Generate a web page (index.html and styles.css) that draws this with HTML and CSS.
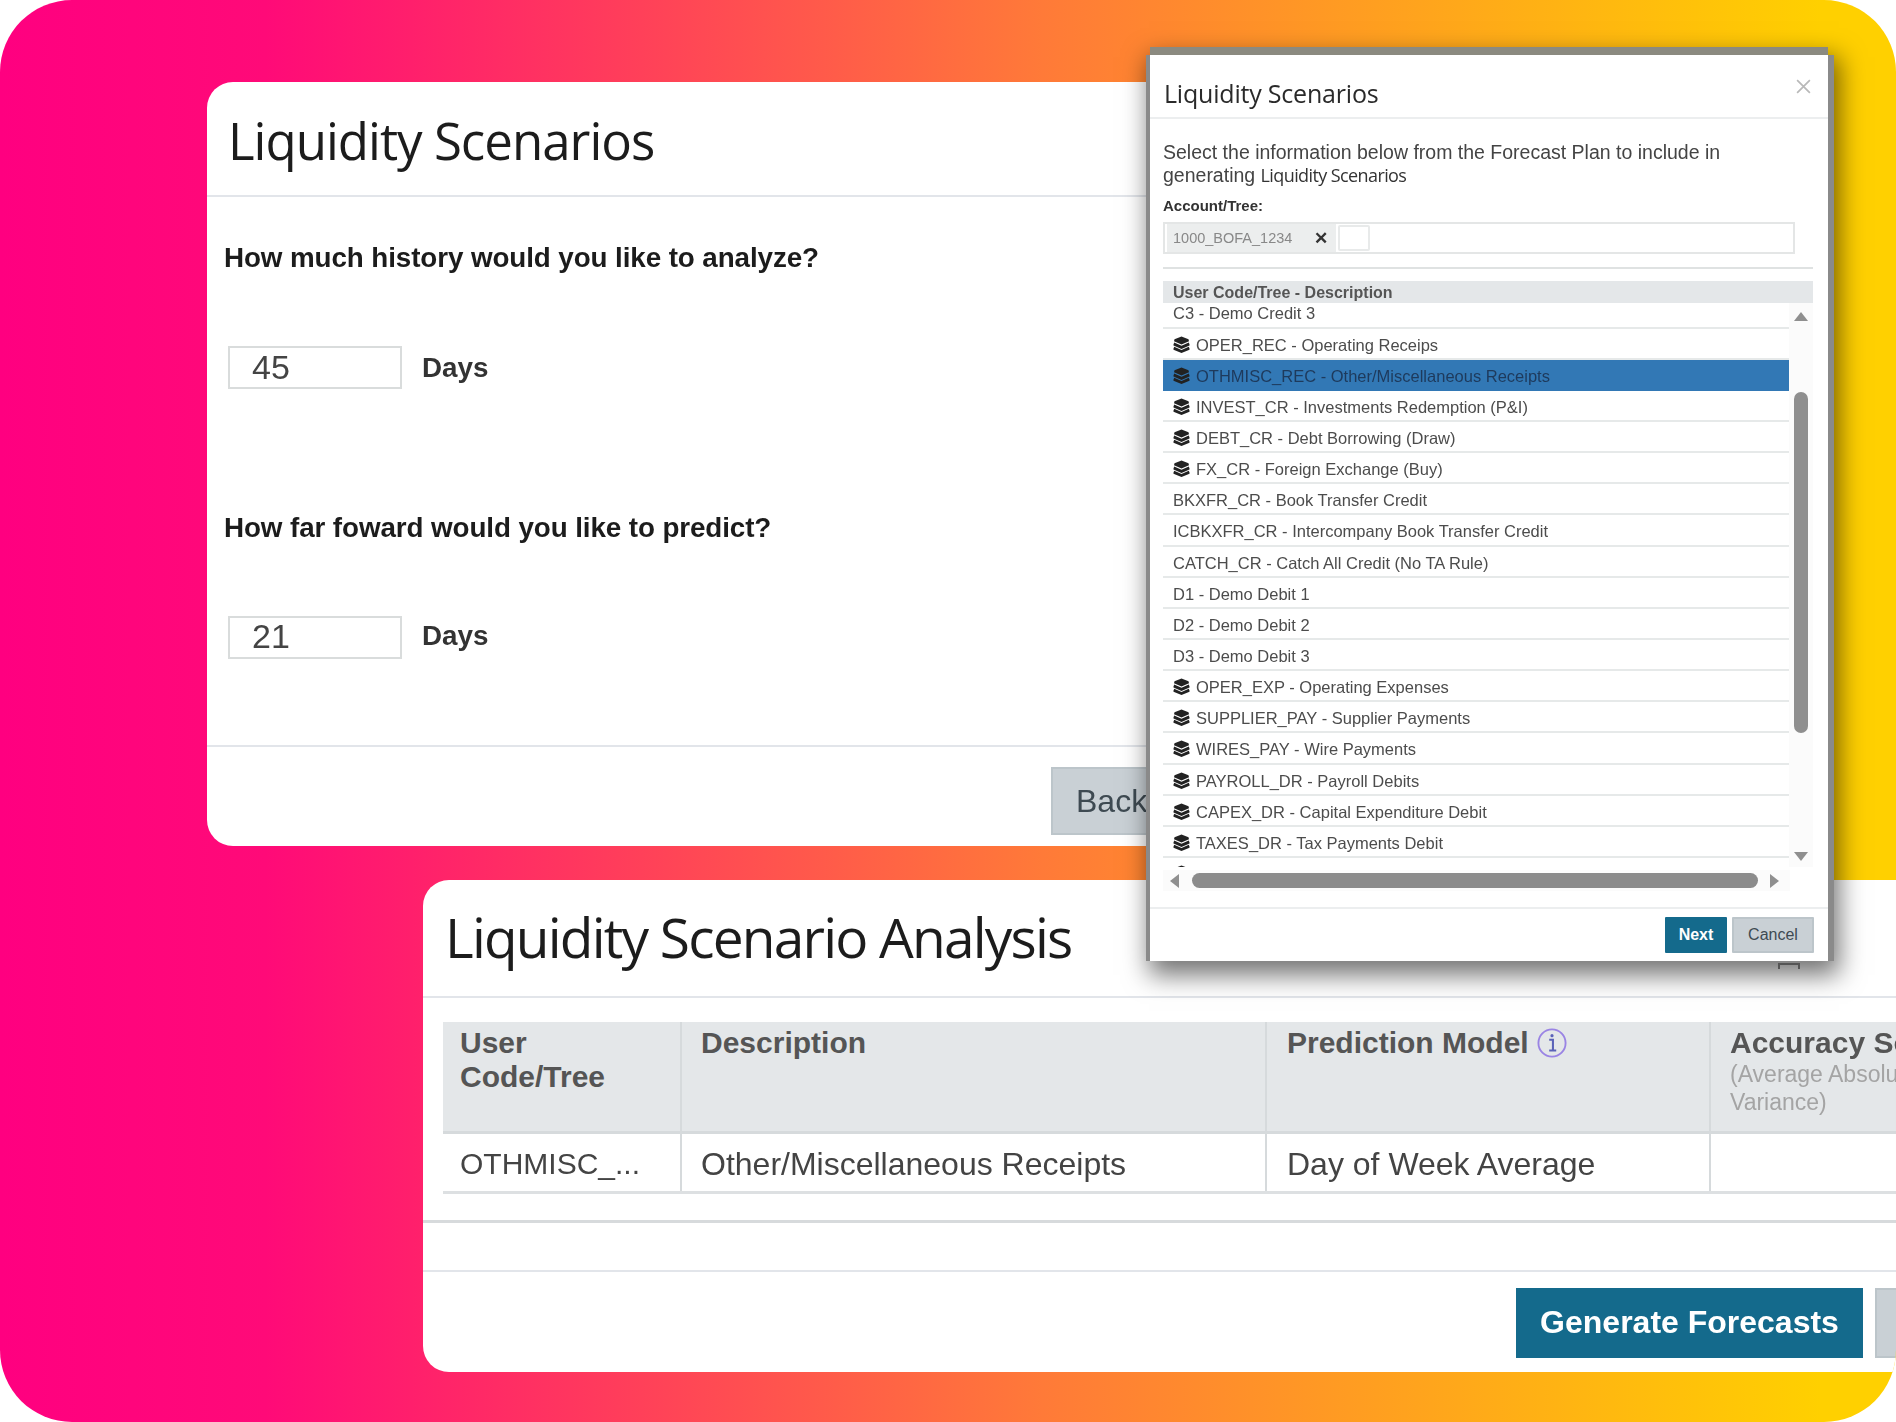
FILE: index.html
```html
<!DOCTYPE html>
<html lang="en">
<head>
<meta charset="utf-8">
<title>Liquidity Scenarios</title>
<link rel="stylesheet" href="styles.css">
</head>
<body>
<svg class="defs" width="0" height="0" aria-hidden="true">
  <symbol id="stack" viewBox="0 0 17 17">
    <path d="M8.5 .5 15.5 3.2 16 5.2 8.5 8.4 1 5.2 1.5 3.2Z"/>
    <path d="M1.2 6.6 8.5 9.7l7.3-3.1L16.5 8.4v1.2L8.5 13 .5 9.6V8.4Z"/>
    <path d="M1.2 10.8 8.5 13.9l7.3-3.1.7 1.8v1.2L8.5 17 .5 13.8v-1.2Z"/>
  </symbol>
</svg>
<main class="stage">
  <section class="card card-history">
    <header class="card-head"><h1 class="title">Liquidity Scenarios</h1></header>
    <div class="card-body">
      <p class="question">How much history would you like to analyze?</p>
      <div class="field"><span class="num-input">45</span><span class="unit">Days</span></div>
      <p class="question question-next">How far foward would you like to predict?</p>
      <div class="field field-low"><span class="num-input">21</span><span class="unit">Days</span></div>
    </div>
    <footer class="card-foot"><button class="btn btn-grey btn-back">Back</button></footer>
  </section>

  <section class="card card-analysis">
    <header class="card-head analysis-head"><h1 class="title title-large">Liquidity Scenario Analysis</h1></header>
    <div class="table-wrap">
      <table class="grid">
        <colgroup><col class="c1"><col class="c2"><col class="c3"><col class="c4"></colgroup>
        <thead>
          <tr>
            <th>User<br>Code/Tree</th>
            <th>Description</th>
            <th>Prediction Model <svg class="info" viewBox="0 0 32 32"><circle cx="16" cy="16" r="14.5" fill="none" stroke="#9a84e4" stroke-width="2"/><path d="M13 12.5H17V24M13 24H20.5" fill="none" stroke="#5a62b8" stroke-width="2.2"/><circle cx="16" cy="8.2" r="1.7" fill="#5a62b8"/></svg></th>
            <th>Accuracy Score<small>(Average Absolute<br>Variance)</small></th>
          </tr>
        </thead>
        <tbody>
          <tr><td class="td-code">OTHMISC_...</td><td>Other/Miscellaneous Receipts</td><td>Day of Week Average</td><td></td></tr>
        </tbody>
      </table>
    </div>
    <div class="divider"></div>
    <footer class="card-foot analysis-foot">
      <button class="btn btn-teal btn-generate">Generate Forecasts</button>
      <button class="btn btn-grey btn-tail" aria-label="Cancel"></button>
    </footer>
  </section>

  <section class="dialog">
    <header class="dialog-head">
      <h2 class="dialog-title">Liquidity Scenarios</h2>
      <svg class="close" viewBox="0 0 16 16"><path d="M2 2 14 14M14 2 2 14" fill="none" stroke="#b9b9b9" stroke-width="1.6"/></svg>
    </header>
    <div class="dialog-body">
      <p class="intro">Select the information below from the Forecast Plan to include in generating <span class="intro-alt">Liquidity Scenarios</span></p>
      <label class="label">Account/Tree:</label>
      <div class="tag-input">
        <span class="chip"><span class="chip-text">1000_BOFA_1234</span><b class="chip-x">✕</b></span>
        <span class="mini-box"></span>
      </div>
      <hr class="rule">
      <div class="list-head">User Code/Tree - Description</div>
      <div class="list-frame">
        <div class="list-view">
          <ul class="rows">
            <li class="row">C3 - Demo Credit 3</li>
            <li class="row"><svg class="stack"><use href="#stack"/></svg>OPER_REC - Operating Receips</li>
            <li class="row row-on"><svg class="stack"><use href="#stack"/></svg>OTHMISC_REC - Other/Miscellaneous Receipts</li>
            <li class="row"><svg class="stack"><use href="#stack"/></svg>INVEST_CR - Investments Redemption (P&amp;I)</li>
            <li class="row"><svg class="stack"><use href="#stack"/></svg>DEBT_CR - Debt Borrowing (Draw)</li>
            <li class="row"><svg class="stack"><use href="#stack"/></svg>FX_CR - Foreign Exchange (Buy)</li>
            <li class="row">BKXFR_CR - Book Transfer Credit</li>
            <li class="row">ICBKXFR_CR - Intercompany Book Transfer Credit</li>
            <li class="row">CATCH_CR - Catch All Credit (No TA Rule)</li>
            <li class="row">D1 - Demo Debit 1</li>
            <li class="row">D2 - Demo Debit 2</li>
            <li class="row">D3 - Demo Debit 3</li>
            <li class="row"><svg class="stack"><use href="#stack"/></svg>OPER_EXP - Operating Expenses</li>
            <li class="row"><svg class="stack"><use href="#stack"/></svg>SUPPLIER_PAY - Supplier Payments</li>
            <li class="row"><svg class="stack"><use href="#stack"/></svg>WIRES_PAY - Wire Payments</li>
            <li class="row"><svg class="stack"><use href="#stack"/></svg>PAYROLL_DR - Payroll Debits</li>
            <li class="row"><svg class="stack"><use href="#stack"/></svg>CAPEX_DR - Capital Expenditure Debit</li>
            <li class="row"><svg class="stack"><use href="#stack"/></svg>TAXES_DR - Tax Payments Debit</li>
            <li class="row"><svg class="stack"><use href="#stack"/></svg></li>
          </ul>
        </div>
        <div class="vbar">
          <span class="tri tri-up"></span>
          <span class="vthumb"></span>
          <span class="tri tri-down"></span>
        </div>
      </div>
      <div class="hbar">
        <span class="tri tri-left"></span>
        <span class="hthumb"></span>
        <span class="tri tri-right"></span>
      </div>
    </div>
    <footer class="dialog-foot">
      <button class="btn btn-teal btn-small btn-next">Next</button>
      <button class="btn btn-grey btn-small btn-cancel">Cancel</button>
    </footer>
  </section>
  <span class="peek"></span>
</main>
</body>
</html>
```

FILE: styles.css
```css
* { box-sizing: border-box; }
html, body { margin: 0; padding: 0; }
body { width: 1896px; height: 1422px; background: #fff; overflow: hidden; font-family: "Liberation Sans", Arial, sans-serif; }
.defs { position: absolute; }
h1, h2, p, ul { margin: 0; padding: 0; }
ul { list-style: none; }

.stage {
  position: relative;
  width: 1896px;
  height: 1422px;
  border-radius: 72px;
  overflow: hidden;
  background: linear-gradient(90deg, #ff0080 0%, #ff0a78 14%, #ff7a38 55%, #ffd000 96%);
}

.card { position: absolute; background: #fff; border-radius: 26px; color: #333; filter: blur(.7px); }
.card-history { left: 207px; top: 82px; width: 1000px; height: 764px; }
.card-analysis { left: 423px; top: 880px; width: 1500px; height: 492px; }

.card-head { height: 115px; display: flex; align-items: center; padding: 2px 0 0 21px; border-bottom: 2px solid #e2e5ea; }
.title { font-family: "Open Sans", sans-serif; font-weight: 400; font-size: 51px; letter-spacing: -1px; color: #1c1c1c; }
.title-large { font-size: 55px; letter-spacing: -1.8px; }
.analysis-head { height: 118px; padding: 0 0 4px 22px; }

.card-body { padding: 39px 0 0 17px; height: 550px; border-bottom: 2px solid #e2e5ea; }
.question { font-size: 27.8px; font-weight: 700; line-height: 44px; color: #1c1c1c; letter-spacing: -.1px; }
.field { display: flex; align-items: center; gap: 20px; margin: 66px 0 0 4px; }
.field-low .num-input { padding-bottom: 2px; }
.field-low .unit { margin-top: -4px; }
.question-next { margin-top: 117px; }
.num-input { width: 174px; height: 43px; display: flex; align-items: center; padding-left: 22px; font-size: 34px; color: #444; border: 2px solid #d9dcdc; }
.unit { font-size: 27.8px; font-weight: 700; color: #333; }

.card-foot { display: flex; align-items: flex-start; }
.card-history .card-foot { padding: 20px 0 0 844px; }
.btn { font-family: "Liberation Sans", Arial, sans-serif; border: 0; padding: 0; display: block; }
.btn-grey { background: #c9d0d5; color: #3e4a52; border: 2px solid #bcc5ca; }
.btn-teal { background: #146a8c; color: #fff; }
.btn-back { width: 140px; height: 68px; font-size: 32px; text-align: left; padding-left: 23px; }

.table-wrap { padding: 24px 0 0 20px; }
.grid { border-collapse: collapse; table-layout: fixed; width: 1478px; }
.c1 { width: 238px; } .c2 { width: 585px; } .c3 { width: 444px; } .c4 { width: 211px; }
.grid th { height: 110px; vertical-align: top; text-align: left; background: #e4e7e9; font-size: 30px; font-weight: 700; line-height: 34px; color: #555; padding: 4px 14px 0 19px; border-right: 2px solid #d6dadc; border-bottom: 3px solid #d6dadc; white-space: nowrap; }
.grid th:nth-child(3), .grid td:nth-child(3) { padding-left: 20px; }
.grid th:first-child, .grid td:first-child { padding-left: 17px; }
.grid th small { display: block; font-size: 23px; font-weight: 400; line-height: 28px; color: #a4a4a4; }
.grid td { height: 60px; font-size: 32px; color: #444; padding: 4px 14px 0 19px; border-right: 2px solid #d6dadc; border-bottom: 3px solid #dde0e2; white-space: nowrap; }
.grid .td-code { font-size: 30px; }
.grid th:last-child, .grid td:last-child { border-right: 0; }
.info { width: 30px; height: 32px; margin: -8px 0 -4px 0; vertical-align: middle; }
.divider { height: 3px; margin-top: 26px; background: #d7dadc; }
.analysis-foot { margin-top: 47px; border-top: 2px solid #e2e5ea; padding: 16px 0 0 1093px; gap: 12px; }
.btn-generate { width: 347px; height: 70px; font-size: 32px; font-weight: 700; flex: none; }
.btn-tail { width: 200px; height: 70px; flex: none; }

.dialog {
  position: absolute;
  left: 1150px;
  top: 55px;
  width: 678px;
  height: 906px;
  background: #fff;
  color: #444;
  filter: blur(.55px);
  box-shadow: 0 -8px 0 0 #8b8a80, -4px 0 0 0 #8a8a8a, 6px 0 0 0 #8a8a8a, 5px 8px 24px 6px rgba(0,0,0,.55);
}
.dialog-head { height: 64px; display: flex; align-items: center; justify-content: space-between; padding: 14px 16px 0 14px; border-bottom: 2px solid #eceeef; }
.dialog-title { font-family: "Open Sans", sans-serif; font-weight: 400; font-size: 25px; letter-spacing: -.2px; color: #2a2a2a; }
.close { width: 17px; height: 17px; margin-top: -14px; }
.dialog-body { padding: 22px 15px 0 13px; }
.intro { max-width: 590px; font-size: 19.5px; line-height: 23px; color: #444; }
.intro-alt { font-family: "Open Sans", sans-serif; letter-spacing: -.6px; font-size: 18px; color: #333; }
.label { display: block; margin-top: 10px; font-size: 15px; font-weight: 700; line-height: 18px; color: #333; }
.tag-input { display: flex; align-items: center; gap: 2px; width: 632px; height: 32px; margin-top: 7px; border: 2px solid #e4e6e6; padding: 0 0 0 2px; }
.chip { width: 169px; height: 28px; display: flex; align-items: center; justify-content: space-between; background: #eceeee; padding: 0 8px 0 6px; }
.chip-text { font-size: 14.5px; color: #888; }
.chip-x { font-size: 17px; color: #333; }
.mini-box { width: 32px; height: 26px; border: 2px solid #e8eaea; border-radius: 2px; background: #fff; }
.rule { border: 0; height: 2px; margin: 13px 0 0; background: #dfe2e2; }
.list-head { height: 22px; margin-top: 12px; background: #e4e7e9; padding-left: 10px; font-size: 16px; font-weight: 700; line-height: 24px; color: #555; }
.list-frame { display: flex; height: 564px; }
.list-view { flex: 1; overflow: hidden; }
.rows { margin-top: -5.6px; }
.row { height: 31.15px; display: flex; align-items: center; padding: 4px 0 0 10px; font-size: 16.5px; color: #4c4c4c; white-space: nowrap; border-bottom: 2px solid #e6e9e9; }
.row-on { background: #3278b5; color: #1e3a5c; border-bottom-color: #3278b5; }
.row .stack { width: 17px; height: 17px; margin: -2px 6px 0 0; fill: #222; flex: none; }
.vbar { position: relative; width: 24px; background: #fbfbfb; display: flex; flex-direction: column; align-items: center; }
.vthumb { position: absolute; left: 5px; top: 89px; width: 14px; height: 341px; border-radius: 7px; background: #8f8f8f; }
.tri { display: block; width: 0; height: 0; border-style: solid; border-color: transparent; }
.tri-up { position: absolute; left: 5px; top: 9px; border-width: 0 7px 9px; border-bottom-color: #8f8f8f; }
.tri-down { position: absolute; left: 5px; top: 549px; border-width: 9px 7px 0; border-top-color: #8f8f8f; }
.hbar { display: flex; align-items: center; height: 21px; margin-top: 3px; width: 627px; background: #fbfbfb; padding-left: 7px; }
.tri-left { border-width: 7px 9px 7px 0; border-right-color: #8f8f8f; }
.tri-right { border-width: 7px 0 7px 9px; border-left-color: #8f8f8f; margin-left: 12px; }
.hthumb { width: 566px; height: 15px; margin-left: 13px; border-radius: 8px; background: #8b8b8b; }
.dialog-foot { position: absolute; left: 0; right: 0; bottom: 0; height: 54px; border-top: 2px solid #eceeef; display: flex; justify-content: flex-end; gap: 5px; padding: 8px 14px 0 0; }
.btn-small { height: 36px; font-size: 16px; font-weight: 700; border-radius: 1px; }
.btn-next { width: 62px; }
.btn-cancel { width: 82px; font-weight: 400; }
.peek { position: absolute; left: 1778px; top: 963px; width: 22px; height: 6px; border: 2px solid #555; border-bottom: 0; }
```
